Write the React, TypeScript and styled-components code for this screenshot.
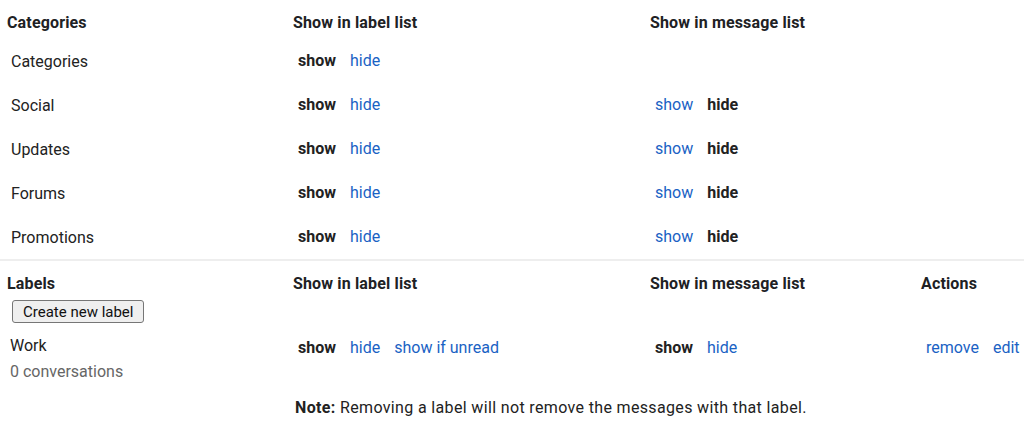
import React from 'react';
import styled, { createGlobalStyle } from 'styled-components';

const GlobalStyle = createGlobalStyle`
  body {
    margin: 0;
    background: #fff;
    font-family: Roboto, 'Liberation Sans', Arial, sans-serif;
    color: #202124;
  }
`;

type Visibility = 'show' | 'hide';

interface CategoryRow {
  name: string;
  labelList: Visibility;
  messageList?: Visibility;
}

const categories: CategoryRow[] = [
  { name: 'Categories', labelList: 'show' },
  { name: 'Social', labelList: 'show', messageList: 'hide' },
  { name: 'Updates', labelList: 'show', messageList: 'hide' },
  { name: 'Forums', labelList: 'show', messageList: 'hide' },
  { name: 'Promotions', labelList: 'show', messageList: 'hide' },
];

const ToggleLinks = ({ options, active }: { options: string[]; active: string }) => (
  <LinkGroup>
    {options.map((opt) =>
      opt === active ? <Current key={opt}>{opt}</Current> : <Action key={opt}>{opt}</Action>
    )}
  </LinkGroup>
);

const App = () => {
  return (
    <>
      <GlobalStyle />
      <Page>
        <Section divided>
          <HeadCell>Categories</HeadCell>
          <HeadCell>Show in label list</HeadCell>
          <HeadCell>Show in message list</HeadCell>
          <HeadCell />
          {categories.map((row) => (
            <React.Fragment key={row.name}>
              <NameCell>{row.name}</NameCell>
              <BodyCell>
                <ToggleLinks options={['show', 'hide']} active={row.labelList} />
              </BodyCell>
              <BodyCell>
                {row.messageList && (
                  <ToggleLinks options={['show', 'hide']} active={row.messageList} />
                )}
              </BodyCell>
              <BodyCell />
            </React.Fragment>
          ))}
        </Section>

        <Section labels>
          <HeadCell>
            Labels
            <CreateButton type="button">Create new label</CreateButton>
          </HeadCell>
          <HeadCell>Show in label list</HeadCell>
          <HeadCell>Show in message list</HeadCell>
          <HeadCell>Actions</HeadCell>

          <LabelCell>
            <LabelName>Work</LabelName>
            <LabelCount>0 conversations</LabelCount>
          </LabelCell>
          <LabelLinks>
            <ToggleLinks options={['show', 'hide', 'show if unread']} active="show" />
          </LabelLinks>
          <LabelLinks>
            <ToggleLinks options={['show', 'hide']} active="show" />
          </LabelLinks>
          <LabelLinks>
            <LinkGroup>
              <Action>remove</Action>
              <Action>edit</Action>
            </LinkGroup>
          </LabelLinks>

          <Note>
            <strong>Note:</strong> Removing a label will not remove the messages with that
            label.
          </Note>
        </Section>
      </Page>
    </>
  );
};

const Page = styled.div`
  width: 1024px;
  height: 443px;
  overflow: hidden;
`;

const Section = styled.div<{ divided?: boolean; labels?: boolean }>`
  display: grid;
  grid-template-columns: 286px 357px 271px 1fr;
  grid-auto-rows: ${({ labels }) => (labels ? 'auto' : '44px')};
  grid-template-rows: ${({ labels }) => (labels ? 'auto' : '39px')};
  border-bottom: ${({ divided }) => (divided ? '2px solid #eeeeee' : 'none')};
`;

const HeadCell = styled.div`
  padding: 14px 0 0 7px;
  font-size: 16px;
  line-height: 18px;
  font-weight: 700;
  letter-spacing: 0.15px;
  color: #202124;
`;

const BodyCell = styled.div`
  display: flex;
  align-items: center;
  padding-left: 12px;
  font-size: 16px;
`;

const NameCell = styled(BodyCell)`
  padding-left: 11px;
  color: #222;
`;

const LinkGroup = styled.div`
  display: flex;
  gap: 14px;
  font-size: 16px;
  line-height: 20px;
`;

const Current = styled.span`
  font-weight: 700;
  color: #222;
`;

const Action = styled.span`
  color: #1a62c4;
  cursor: pointer;
`;

const CreateButton = styled.button`
  display: block;
  margin: 7px 0 0 5px;
  padding: 1px 10px;
  height: 23px;
  font-family: Roboto, 'Liberation Sans', Arial, sans-serif;
  font-size: 15px;
  font-weight: 400;
  color: #111;
  background: #efefef;
  border: 1px solid #767676;
  border-radius: 3px;
`;

const LabelCell = styled.div`
  padding: 13px 0 0 10px;
  font-size: 16px;
  line-height: 20px;
`;

const LabelName = styled.div`
  color: #222;
`;

const LabelCount = styled.div`
  margin-top: 6px;
  color: #666;
`;

const LabelLinks = styled.div`
  padding: 15px 0 0 12px;
`;

const Note = styled.div`
  grid-column: 2 / 5;
  padding: 17px 0 0 9px;
  font-size: 16px;
  line-height: 18px;
  letter-spacing: 0.35px;
  color: #222;
`;

export default App;
